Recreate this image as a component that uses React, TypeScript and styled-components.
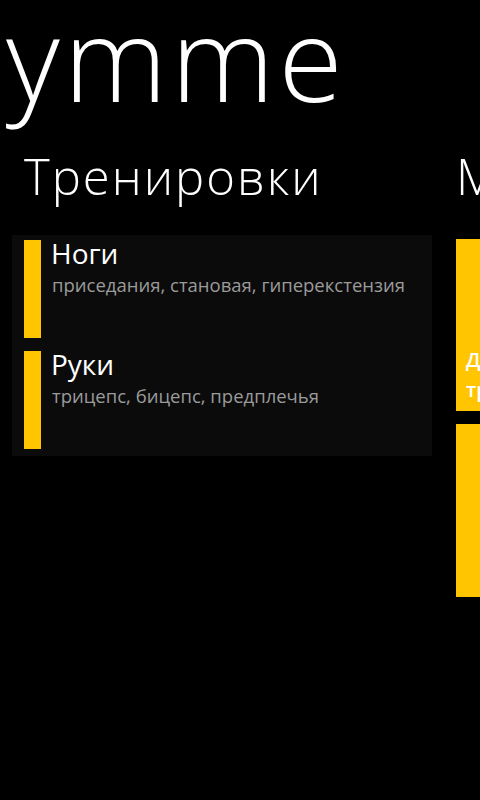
import React from "react";
import styled, { createGlobalStyle } from "styled-components";

const Global = createGlobalStyle`
  html, body { margin: 0; padding: 0; background: #000; }
  body { width: 480px; height: 800px; overflow: hidden; font-family: "Open Sans", "Noto Sans", sans-serif; color: #fff; }
`;

const Page = styled.div`
  width: 480px;
  height: 800px;
  overflow: hidden;
  background: #000;
`;

const AppTitle = styled.h1`
  margin: -2px 0 0;
  padding-left: 6px;
  font-family: "Open Sans", sans-serif;
  font-weight: 300;
  font-size: 117px;
  line-height: 117px;
  letter-spacing: 4px;
  white-space: nowrap;
  height: 148px;
`;

const Strip = styled.div`
  display: flex;
  padding-left: 12px;
  gap: 24px;
  width: max-content;
`;

const Section = styled.section<{ $w: number }>`
  width: ${(p) => p.$w}px;
  flex: none;
  display: flex;
  flex-direction: column;
`;

const SectionHeader = styled.h2<{ $indent: number }>`
  margin: 0;
  padding-left: ${(p) => p.$indent}px;
  font-family: "Open Sans", sans-serif;
  font-weight: 300;
  font-size: 49px;
  line-height: 60px;
  letter-spacing: 2px;
  height: 89px;
  white-space: nowrap;
`;

const Panel = styled.div`
  background: #0b0b0b;
  padding: 5px 12px 7px;
  display: flex;
  flex-direction: column;
  gap: 13px;
`;

const Item = styled.div`
  display: flex;
  gap: 11px;
  height: 98px;
`;

const Bar = styled.div`
  width: 17px;
  flex: none;
  background: #ffc500;
`;

const ItemText = styled.div`
  display: flex;
  flex-direction: column;
`;

const ItemTitle = styled.div`
  font-size: 28px;
  line-height: 32px;
  margin-top: -3px;
  margin-left: -1px;
  color: #fff;
`;

const ItemSub = styled.div`
  font-size: 18.5px;
  line-height: 24px;
  color: #9b9b9b;
  margin-top: 4px;
  white-space: nowrap;
`;

const Tiles = styled.div`
  display: flex;
  flex-direction: column;
  gap: 13px;
  padding-top: 4px;
`;

const Tile = styled.div<{ $h: number }>`
  height: ${(p) => p.$h}px;
  width: 173px;
  background: #ffc500;
  display: flex;
  flex-direction: column;
  justify-content: flex-end;
  padding: 0 10px 6px;
  box-sizing: border-box;
`;

const TileLine = styled.div`
  font-size: 20px;
  font-weight: 600;
  line-height: 30px;
  color: #fff;
  white-space: nowrap;
`;

const workouts = [
  { name: "Ноги", detail: "приседания, становая, гиперекстензия" },
  { name: "Руки", detail: "трицепс, бицепс, предплечья" },
];

export default function App() {
  return (
    <Page>
      <Global />
      <AppTitle>ymme</AppTitle>
      <Strip>
        <Section $w={420}>
          <SectionHeader $indent={12}>Тренировки</SectionHeader>
          <Panel>
            {workouts.map((w) => (
              <Item key={w.name}>
                <Bar />
                <ItemText>
                  <ItemTitle>{w.name}</ItemTitle>
                  <ItemSub>{w.detail}</ItemSub>
                </ItemText>
              </Item>
            ))}
          </Panel>
        </Section>
        <Section $w={360}>
          <SectionHeader $indent={0}>Мои</SectionHeader>
          <Tiles>
            <Tile $h={172}>
              <TileLine>Добавить</TileLine>
              <TileLine>тренировку</TileLine>
            </Tile>
            <Tile $h={173} />
          </Tiles>
        </Section>
      </Strip>
    </Page>
  );
}
